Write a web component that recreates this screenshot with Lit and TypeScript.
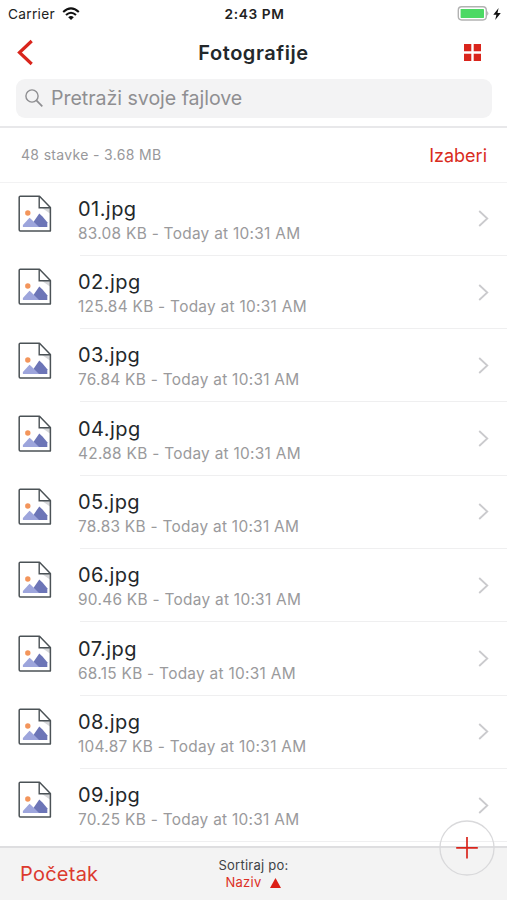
import { LitElement, html, css, svg } from "lit";
import { customElement } from "lit/decorators.js";

const FILES = [
  ["01.jpg", "83.08 KB"],
  ["02.jpg", "125.84 KB"],
  ["03.jpg", "76.84 KB"],
  ["04.jpg", "42.88 KB"],
  ["05.jpg", "78.83 KB"],
  ["06.jpg", "90.46 KB"],
  ["07.jpg", "68.15 KB"],
  ["08.jpg", "104.87 KB"],
  ["09.jpg", "70.25 KB"],
];

@customElement("app-root")
export class AppRoot extends LitElement {
  static styles = css`
    :host {
      display: flex;
      flex-direction: column;
      position: relative;
      box-sizing: border-box;
      width: 100%;
      height: 900px;
      overflow: hidden;
      background: #fff;
      color: #23282b;
      font-family: Inter, "Liberation Sans", sans-serif;
      white-space: nowrap;
    }
    svg { display: block; flex: none; }
    .status {
      display: grid;
      grid-template-columns: 1fr auto 1fr;
      align-items: center;
      height: 27px;
      padding: 0 6px 0 8px;
      font-size: 13.7px;
      color: #222;
    }
    .carrier { display: flex; align-items: center; gap: 7px; letter-spacing: 0.3px; }
    .time { font-weight: 600; letter-spacing: 0.6px; }
    .power { display: flex; align-items: center; justify-content: flex-end; gap: 4px; }
    .nav {
      display: grid;
      grid-template-columns: 1fr auto 1fr;
      align-items: center;
      height: 51px;
      padding: 0 26px 0 17px;
    }
    .title { font-size: 20px; font-weight: 600; letter-spacing: 0.55px; padding-right: 0; margin-left: 9px; }
    .grid { justify-self: end; }
    .search {
      display: flex;
      align-items: center;
      gap: 8px;
      height: 39px;
      margin: 1px 15px 8px 16px;
      padding-left: 9px;
      border-radius: 9px;
      background: #f3f3f4;
      color: #8f8f92;
      font-size: 19.6px;
    }
    .search svg { margin-bottom: 1px; }
    .query { margin-bottom: 2px; letter-spacing: -0.04px; }
    .summary {
      display: flex;
      align-items: center;
      justify-content: space-between;
      box-sizing: border-box;
      height: 56.6px;
      border-top: 2px solid #e8e8ea;
      border-bottom: 1px solid #f2f2f3;
      padding: 0 20px 0 21px;
    }
    .count { font-size: 14px; letter-spacing: 0.33px; color: #98989b; }
    .pick { font-size: 18px; color: #d92c20; margin-top: 1px; }
    .row {
      display: flex;
      box-sizing: border-box;
      height: 73.3px;
      padding-left: 18px;
    }
    .doc { margin-top: 12.4px; }
    .body {
      flex: 1;
      display: flex;
      align-items: center;
      justify-content: space-between;
      box-sizing: border-box;
      margin-left: 28px;
      padding-right: 18px;
      border-bottom: 1px solid #efeff0;
    }
    .text { margin: 4px 0 0 -2px; }
    .name { font-size: 20px; line-height: 25px; letter-spacing: 0.45px; }
    .meta { font-size: 15.4px; line-height: 23px; letter-spacing: 0.29px; color: #9a9a9c; }
    .bar {
      position: absolute;
      left: 0;
      right: 0;
      bottom: 0;
      display: grid;
      grid-template-columns: 1fr auto 1fr;
      align-items: center;
      box-sizing: border-box;
      height: 54px;
      padding: 0 20px;
      border-top: 2px solid #dedee0;
      background: #f3f3f3;
    }
    .home { font-size: 20px; letter-spacing: 0.25px; color: #dc3a2e; }
    .sort { font-size: 13px; line-height: 17px; letter-spacing: 0.25px; text-align: center; color: #3e4245; }
    .key { display: flex; justify-content: center; align-items: center; gap: 9px; color: #dc2f24; }
    .add {
      position: absolute;
      right: 12px;
      bottom: 24.5px;
    }
  `;

  private docIcon() {
    return svg`<svg class="doc" width="34" height="38" viewBox="0 0 34 38">
      <path d="M24 13H32V18.5Z" fill="#d5d6d8"/>
      <path d="M2.3 1.2H21.5L32.4 12.5V35.9H2.3Q1.2 35.9 1.2 34.8V2.3Q1.2 1.2 2.3 1.2Z" fill="none" stroke="#4b5256" stroke-width="1.5" stroke-linejoin="round"/>
      <path d="M21.2 1.5V12.7H32.2" fill="none" stroke="#4b5256" stroke-width="1.4"/>
      <circle cx="9.8" cy="18" r="2.7" fill="#f3955b"/>
      <path d="M12 32L21.3 18.4L24.5 21.6L29.3 27.2V32Z" fill="#6c75b7"/>
      <path d="M4.9 32V30L11.5 22.8L13 24L21 32Z" fill="#9da5dc"/>
    </svg>`;
  }

  render() {
    return html`
      <div class="status">
        <div class="carrier">
          <span>Carrier</span>
          <svg width="18" height="14" viewBox="0 0 18 14">
            <g fill="none" stroke="#111" stroke-width="2.1">
              <path d="M1.2 5Q9 -2.1 16.8 5"/>
              <path d="M4 8Q9 3.5 14 8"/>
            </g>
            <path d="M6.2 10.2Q9 7.8 11.8 10.2L9 13Z" fill="#111"/>
          </svg>
        </div>
        <span class="time">2:43 PM</span>
        <div class="power">
          <svg width="32" height="15" viewBox="0 0 32 15">
            <rect x="1.3" y="0.8" width="28" height="13.2" rx="3.4" fill="#fff" stroke="#b2b2b2" stroke-width="1.4"/>
            <rect x="3.6" y="2.9" width="23.4" height="9" rx="0.6" fill="#4cd964"/>
            <path d="M30.4 5Q32.2 7.4 30.4 9.8Z" fill="#999"/>
          </svg>
          <svg width="8" height="12" viewBox="0 0 8 12">
            <path d="M5.6 0L0.3 6.7H3.4L2.2 12L7.8 4.9H4.5Z" fill="#111"/>
          </svg>
        </div>
      </div>
      <div class="nav">
        <svg width="17" height="27" viewBox="0 0 17 27">
          <path d="M14.7 2L2.5 13.5L14.7 25" fill="none" stroke="#d9251c" stroke-width="3.2"/>
        </svg>
        <span class="title">Fotografije</span>
        <svg class="grid" width="17" height="17" viewBox="0 0 17 17">
          <path d="M0 0H7.3V7.3H0ZM9.7 0H17V7.3H9.7ZM0 9.7H7.3V17H0ZM9.7 9.7H17V17H9.7Z" fill="#d9251c"/>
        </svg>
      </div>
      <div class="search">
        <svg width="18" height="18" viewBox="0 0 18 18">
          <g fill="none" stroke="#8e8e91" stroke-width="1.4">
            <circle cx="7" cy="7" r="6.1"/>
            <path d="M11.4 11.4L17.3 17.3" stroke-width="1.7"/>
          </g>
        </svg>
        <span class="query">Pretraži svoje fajlove</span>
      </div>
      <div class="summary">
        <span class="count">48 stavke - 3.68 MB</span>
        <span class="pick">Izaberi</span>
      </div>
      ${FILES.map(
        ([name, size]) => html`
          <div class="row">
            ${this.docIcon()}
            <div class="body">
              <div class="text">
                <div class="name">${name}</div>
                <div class="meta">${size} - Today at 10:31 AM</div>
              </div>
              <svg width="11" height="17" viewBox="0 0 11 17">
                <path d="M1.2 1L9.3 8.5L1.2 16" fill="none" stroke="#cacacd" stroke-width="1.8"/>
              </svg>
            </div>
          </div>
        `
      )}
      <div class="bar">
        <span class="home">Početak</span>
        <div class="sort">
          <div>Sortiraj po:</div>
          <div class="key">
            <span>Naziv</span>
            <svg width="11" height="10" viewBox="0 0 11 10"><path d="M5.5 0L11 10H0Z" fill="#dc1f16"/></svg>
          </div>
        </div>
      </div>
      <svg class="add" width="56" height="56" viewBox="0 0 56 56">
        <circle cx="28" cy="28" r="27" fill="none" stroke="#d9d9db" stroke-width="1.3"/>
        <path d="M17.2 27.8H38.8M28 17V38.4" stroke="#d9251c" stroke-width="1.7" fill="none"/>
      </svg>
    `;
  }
}
